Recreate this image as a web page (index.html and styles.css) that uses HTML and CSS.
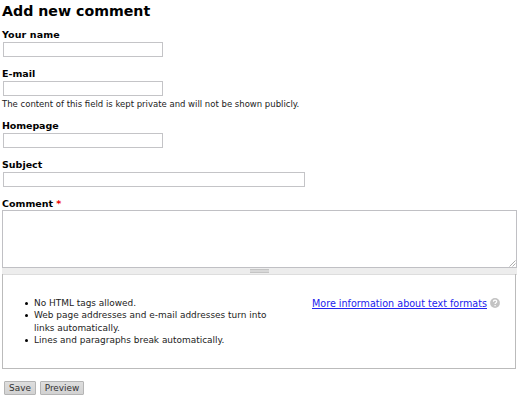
FILE: index.html
```html
<!DOCTYPE html>
<html lang="en">
<head>
<meta charset="utf-8">
<title>Add new comment</title>
<link rel="stylesheet" href="styles.css">
</head>
<body>
<h2 class="title">Add new comment</h2>
<form class="comment-form">
  <div class="item">
    <label class="label l-name" for="name">Your name</label>
    <input class="text" id="name" type="text">
  </div>
  <div class="item item-mail">
    <label class="label" for="mail">E-mail</label>
    <input class="text" id="mail" type="text">
    <div class="description">The content of this field is kept private and will not be shown publicly.</div>
  </div>
  <div class="item">
    <label class="label l-home" for="home">Homepage</label>
    <input class="text" id="home" type="text">
  </div>
  <div class="item">
    <label class="label" for="subject">Subject</label>
    <input class="text wide" id="subject" type="text">
  </div>
  <div class="item-comment">
    <label class="label" for="comment">Comment <span class="required">*</span></label>
    <div class="area">
      <textarea class="textarea" id="comment"></textarea>
      <svg class="resizer" width="7" height="7" viewBox="0 0 7 7"><path d="M0.5 6.5 6.5 0.5M3.5 6.5 6.5 3.5" fill="none" stroke="#999" stroke-width="0.8"/></svg>
    </div>
    <div class="grippie"><span class="grip"></span></div>
  </div>
  <div class="formats">
    <ul class="tips">
      <li>No HTML tags allowed.</li>
      <li>Web page addresses and e-mail addresses turn into<br>links automatically.</li>
      <li>Lines and paragraphs break automatically.</li>
    </ul>
    <div class="help">
      <a class="more" href="#">More information about text formats</a>
      <svg class="help-icon" width="10" height="10" viewBox="0 0 10 10"><circle cx="5" cy="5" r="4.9" fill="#c3c3c3"/><path d="M3.4 3.8C3.4 1.7 6.7 1.7 6.7 3.7C6.7 4.8 5.1 4.8 5.1 6.1M5.1 7V8.2" fill="none" stroke="#fff" stroke-width="1.2"/></svg>
    </div>
  </div>
  <div class="actions">
    <button class="button save" type="button">Save</button>
    <button class="button preview" type="button">Preview</button>
  </div>
</form>
</body>
</html>
```

FILE: styles.css
```css
* { box-sizing: border-box; }
body {
  margin: 0;
  padding: 0 3px 0 2px;
  background: #fff;
  color: #000;
  font-family: Verdana, "DejaVu Sans", sans-serif;
  font-size: 9px;
  height: 400px;
  overflow: hidden;
}
.title { margin: 0; height: 28px; font-size: 14.2px; line-height: 22px; white-space: nowrap; }
.item { height: 39px; }
.item-mail { height: 52px; }
.label { display: block; height: 14px; line-height: 13px; font-size: 9.5px; font-weight: bold; white-space: nowrap; }
.l-name { letter-spacing: 0.1px; }
.l-home { letter-spacing: -0.1px; }
.text {
  display: block;
  width: 160px;
  height: 15px;
  margin: 0 0 0 1px;
  padding: 0;
  border: 1px solid #c4c4c7;
  background: #fff;
}
.wide { width: 302px; }
.description { height: 14px; padding-top: 1px; line-height: 14px; font-size: 8.5px; color: #222; white-space: nowrap; }
.required { color: #e00; }
.item-comment { height: 77px; }
.area { position: relative; height: 58px; }
.textarea {
  display: block;
  width: 515px;
  height: 58px;
  margin: 0;
  border: 1px solid #c0c0c4;
  resize: none;
  background: #fff;
}
.resizer { position: absolute; right: 1px; bottom: 1px; }
.grippie {
  display: flex;
  align-items: center;
  justify-content: center;
  height: 7px;
  background: #ededed;
  border-bottom: 1px solid #ddd;
}
.item-comment .label { height: 13px; }
.grip { width: 19px; height: 4px; background: #d8d8d8; border: solid #c4c4c4; border-width: 1px 0; }
.formats {
  display: flex;
  width: 514px;
  height: 95px;
  padding: 23px 15px 0 0;
  border: 1px solid #bbb;
  border-top: 0;
}
.tips { width: 309px; margin: 0; padding: 0 0 0 21px; font-size: 8.95px; line-height: 12.3px; color: #222; white-space: nowrap; list-style: none; }
.tips li { display: block; padding-left: 10px; }
.tips li::before {
  content: "";
  float: left;
  width: 3px;
  height: 3px;
  margin: 5px 0 0 -9px;
  border-radius: 50%;
  background: #000;
}
.help { display: flex; align-items: center; gap: 3px; height: 12px; white-space: nowrap; }
.more { color: #22e; font-size: 9.6px; text-decoration: underline; }
.help-icon { flex: none; }
.actions { display: flex; gap: 4px; padding: 12px 0 0 2px; }
.button {
  height: 14px;
  margin: 0;
  padding: 0;
  border: 1px solid #b5b5b5;
  border-radius: 1px;
  background: linear-gradient(#dedede, #d2d2d2);
  color: #333;
  font: 8.9px/11px Verdana, "DejaVu Sans", sans-serif;
}
.save { width: 32px; }
.preview { width: 44px; }
```
